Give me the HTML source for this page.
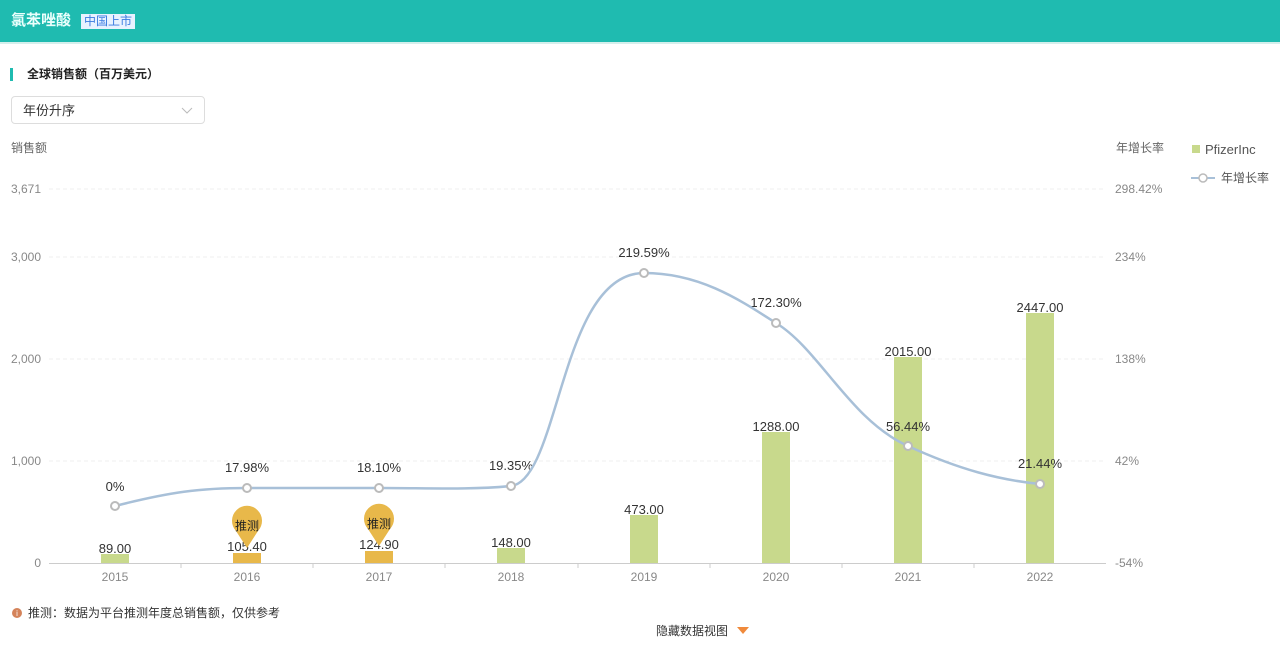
<!DOCTYPE html>
<html><head><meta charset="utf-8"><style>
body{margin:0;width:1280px;height:645px;overflow:hidden;background:#fff;font-family:"Liberation Sans","Noto Sans CJK SC",sans-serif;position:relative}
.hd{position:absolute;left:0;top:0;width:1280px;height:42px;background:#1fbbb0;border-bottom:2px solid #d4efec}
.t1{position:absolute;left:11px;top:11px;color:#eafffc;font-size:15px;font-weight:bold;line-height:20px}
.tag{position:absolute;left:81px;top:14px;height:15px;background:#e8f2ff;color:#3a7be0;font-size:12px;padding:0 3px;line-height:15px}
.sec{position:absolute;left:10px;top:68px;font-size:12px;font-weight:bold;color:#222;padding-left:14px;border-left:3px solid #1fbbb0;line-height:13px}
.sel{position:absolute;left:11px;top:96px;width:194px;height:28px;border:1px solid #ddd;border-radius:4px;font-size:13px;color:#333;line-height:28px;padding-left:11px;box-sizing:border-box}
.ax{position:absolute;font-size:12px;color:#666}
</style></head><body>
<div class="hd"><div class="t1">氯苯唑酸</div><div class="tag">中国上市</div></div>
<div class="sec">全球销售额（百万美元）</div>
<div class="sel">年份升序<svg style="position:absolute;right:11px;top:10px" width="12" height="8"><path d="M1 1L6 6L11 1" fill="none" stroke="#bbb"/></svg></div>
<div class="ax" style="left:11px;top:139px">销售额</div>
<div class="ax" style="left:1116px;top:139px">年增长率</div>
<svg style="position:absolute;left:0;top:0" width="1280" height="645" font-family="Liberation Sans" font-size="12">
<g stroke="#efefef" stroke-dasharray="4 3"><line x1="49" x2="1106" y1="189" y2="189"/><line x1="49" x2="1106" y1="257" y2="257"/><line x1="49" x2="1106" y1="359" y2="359"/><line x1="49" x2="1106" y1="461" y2="461"/></g>
<line x1="49" x2="1106" y1="563.5" y2="563.5" stroke="#ccc"/>
<g stroke="#ccc"><line x1="181" x2="181" y1="563" y2="568"/><line x1="313" x2="313" y1="563" y2="568"/><line x1="445" x2="445" y1="563" y2="568"/><line x1="578" x2="578" y1="563" y2="568"/><line x1="710" x2="710" y1="563" y2="568"/><line x1="842" x2="842" y1="563" y2="568"/><line x1="974" x2="974" y1="563" y2="568"/></g>
<g fill="#888" text-anchor="end"><text x="41" y="193">3,671</text><text x="41" y="261">3,000</text><text x="41" y="363">2,000</text><text x="41" y="465">1,000</text><text x="41" y="567">0</text></g>
<g fill="#888"><text x="1115" y="193">298.42%</text><text x="1115" y="261">234%</text><text x="1115" y="363">138%</text><text x="1115" y="465">42%</text><text x="1115" y="567">-54%</text></g>
<g fill="#888" text-anchor="middle"><text x="115" y="581">2015</text><text x="247" y="581">2016</text><text x="379" y="581">2017</text><text x="511" y="581">2018</text><text x="644" y="581">2019</text><text x="776" y="581">2020</text><text x="908" y="581">2021</text><text x="1040" y="581">2022</text></g>
<g fill="#c8d98c"><rect x="101" y="554" width="28" height="9"/><rect x="497" y="548" width="28" height="15"/><rect x="630" y="515" width="28" height="48"/><rect x="762" y="432" width="28" height="131"/><rect x="894" y="357" width="28" height="206"/><rect x="1026" y="313" width="28" height="250"/></g>
<g fill="#e8b84a"><rect x="233" y="553" width="28" height="10"/><rect x="365" y="551" width="28" height="12"/></g>
<g fill="#333" text-anchor="middle" font-size="13"><text x="115" y="553">89.00</text><text x="247" y="551">105.40</text><text x="379" y="549">124.90</text><text x="511" y="547">148.00</text><text x="644" y="514">473.00</text><text x="776" y="431">1288.00</text><text x="908" y="356">2015.00</text><text x="1040" y="312">2447.00</text>
<text x="115" y="491">0%</text><text x="247" y="472">17.98%</text><text x="379" y="472">18.10%</text><text x="511" y="470">19.35%</text><text x="644" y="257">219.59%</text><text x="776" y="307">172.30%</text><text x="908" y="431">56.44%</text><text x="1040" y="468">21.44%</text></g>
<g fill="#e8b84a"><path d="M247 548L236 531A15 15 0 1 1 258 531Z"/><path d="M379 546L368 529A15 15 0 1 1 390 529Z"/></g>
<g fill="#222" font-size="12" text-anchor="middle"><text x="247" y="530">推测</text><text x="379" y="528">推测</text></g>
<path d="M115 506C170 492 200 488 247 488S330 488 379 488S470 490 511 486C560 480 560 273 644 273C700 273 740 300 776 323C820 350 850 420 908 446C960 470 1000 480 1040 484" fill="none" stroke="#a8c0d8" stroke-width="2.5"/>
<g fill="#fff" stroke="#bbb" stroke-width="2"><circle cx="115" cy="506" r="4"/><circle cx="247" cy="488" r="4"/><circle cx="379" cy="488" r="4"/><circle cx="511" cy="486" r="4"/><circle cx="644" cy="273" r="4"/><circle cx="776" cy="323" r="4"/><circle cx="908" cy="446" r="4"/><circle cx="1040" cy="484" r="4"/></g>
<rect x="1192" y="145" width="8" height="8" fill="#c8d98c"/><text x="1205" y="154" fill="#555" font-size="13">PfizerInc</text>
<line x1="1191" x2="1215" y1="178" y2="178" stroke="#a8c0d8" stroke-width="2"/><circle cx="1203" cy="178" r="4" fill="#fff" stroke="#bbb" stroke-width="1.5"/><text x="1221" y="182" fill="#555" font-family="Noto Sans CJK SC">年增长率</text>
<circle cx="17" cy="613" r="5" fill="#d4835a"/><text x="17" y="616" fill="#fff" font-size="8" text-anchor="middle">i</text>
<text x="28" y="617" fill="#333" font-family="Noto Sans CJK SC">推测：数据为平台推测年度总销售额，仅供参考</text>
<text x="656" y="635" fill="#333" font-family="Noto Sans CJK SC">隐藏数据视图</text>
<path d="M737 627L749 627L743 634Z" fill="#f08a3c"/>
</svg>
</body></html>
